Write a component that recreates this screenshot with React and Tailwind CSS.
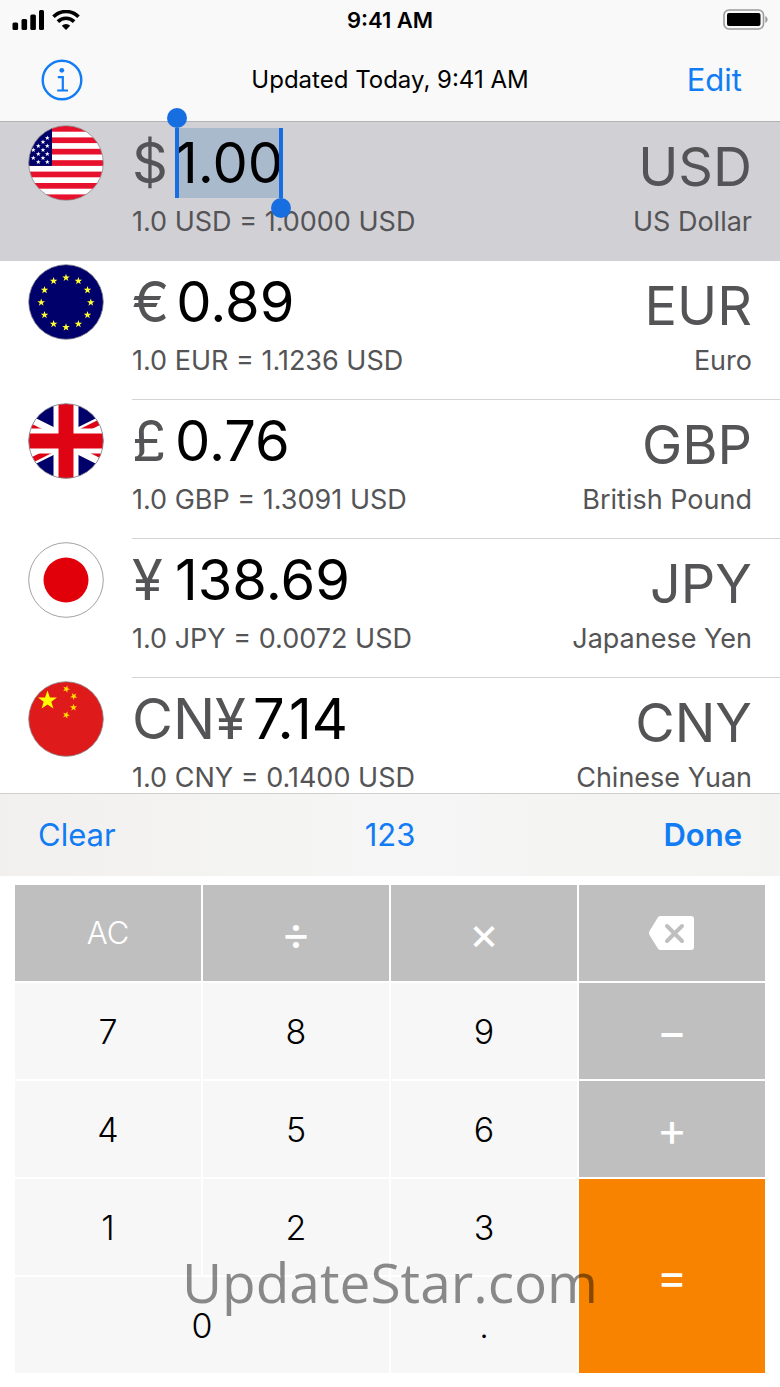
import React from 'react';

const STAR = '0,-10 2.4,-3.1 9.5,-3.1 3.8,1.2 5.9,8.1 0,4 -5.9,8.1 -3.8,1.2 -9.5,-3.1 -2.4,-3.1';

const Star = ({ x, y, size, fill, rotate = 0 }) => (
  <polygon points={STAR} fill={fill} transform={`translate(${x} ${y}) rotate(${rotate}) scale(${size / 10})`} />
);

const US_STARS = [
  [19.3, 13], [15, 17], [19.3, 21], [10.3, 21], [15, 25], [5.3, 25],
  [19.3, 29], [10.3, 29], [15, 33], [5.3, 33], [19.3, 37], [10.3, 37],
];

const UsFlag = () => (
  <>
    <rect width="76" height="76" fill="#fff" />
    {[0, 2, 4, 6, 8, 10, 12].map((i) => (
      <rect key={i} x="0" y={1 + i * 5.7} width="76" height="5.7" fill="#e8112d" />
    ))}
    <rect x="0" y="0" width="24" height="40.9" fill="#00006b" />
    {US_STARS.map(([x, y]) => (
      <Star key={`${x}-${y}`} x={x} y={y} size={2.6} fill="#fff" />
    ))}
  </>
);

const EuFlag = () => (
  <>
    <rect width="76" height="76" fill="#00006b" />
    {Array.from({ length: 12 }, (_, i) => {
      const a = (i * Math.PI) / 6;
      return <Star key={i} x={38 + 24.8 * Math.sin(a)} y={38.5 - 24.8 * Math.cos(a)} size={4} fill="#ffff33" />;
    })}
  </>
);

const UkFlag = () => (
  <>
    <rect width="76" height="76" fill="#00006b" />
    <path d="M-20 9 L96 67 M-20 67 L96 9" stroke="#fff" strokeWidth="14" />
    <path
      d="M38 38 L-20 9 V14 L28 38 Z M28 38 L96 4 V10 L40 38 Z M38 38 L96 67 V62 L48 38 Z M48 38 L-20 72 V66 L36 38 Z"
      fill="#df0414"
    />
    <path d="M38 0 V76 M0 38 H76" stroke="#fff" strokeWidth="25" />
    <path d="M38 0 V76 M0 38 H76" stroke="#df0414" strokeWidth="15" />
  </>
);

const JpFlag = () => (
  <>
    <rect width="76" height="76" fill="#fff" />
    <circle cx="38" cy="38" r="22.500" fill="#e1000a" />
  </>
);

const CnFlag = () => (
  <>
    <rect width="76" height="76" fill="#de1a1a" />
    <Star x={19.5} y={19.5} size={10} fill="#ffff00" />
    <Star x={38.3} y={8} size={3.8} fill="#ffde00" rotate={20} />
    <Star x={45.8} y={15.3} size={3.8} fill="#ffde00" rotate={40} />
    <Star x={45.5} y={26.5} size={3.8} fill="#ffde00" />
    <Star x={38.2} y={34} size={3.8} fill="#ffde00" rotate={20} />
  </>
);

const currencies = [
  { code: 'USD', name: 'US Dollar', symbol: '$', amount: '1.00', rate: '1.0000', Flag: UsFlag, active: true },
  { code: 'EUR', name: 'Euro', symbol: '€', amount: '0.89', rate: '1.1236', Flag: EuFlag },
  { code: 'GBP', name: 'British Pound', symbol: '£', amount: '0.76', rate: '1.3091', Flag: UkFlag },
  { code: 'JPY', name: 'Japanese Yen', symbol: '¥', amount: '138.69', rate: '0.0072', Flag: JpFlag },
  { code: 'CNY', name: 'Chinese Yuan', symbol: 'CN¥', amount: '7.14', rate: '0.1400', Flag: CnFlag },
];

const FlagBadge = ({ code, children }) => (
  <svg viewBox="0 0 76 76" className="size-[76px] shrink-0" aria-hidden="true">
    <clipPath id={`flag-${code}`}>
      <circle cx="38" cy="38" r="37.300" />
    </clipPath>
    <g clipPath={`url(#flag-${code})`}>{children}</g>
    <circle cx="38" cy="38" r="37.300" fill="none" stroke="#8a8a8e" strokeWidth="0.8" />
  </svg>
);

const CurrencyRow = ({ code, name, symbol, amount, rate, Flag, active }) => (
  <li className={`flex shrink-0 pl-7 ${active ? 'bg-[#d1d0d5]' : 'bg-white'}`}>
    <div className="pt-[3px] pr-7">
      <FlagBadge code={code}>
        <Flag />
      </FlagBadge>
    </div>
    <div className={`flex flex-1 justify-between pr-7 pb-[18px] border-b ${active ? 'border-[#d1d0d5]' : 'border-[#d4d4d6]'}`}>
      <div className="pt-[6px]">
        <div className="flex gap-[7px] text-[56px] leading-[70px]">
          <span className="min-w-9 text-[#545456]">{symbol}</span>
          <div className="relative">
            <input
              type="text"
              aria-label={`Amount in ${code}`}
              defaultValue={amount}
              className={`block h-[70px] field-sizing-content text-black outline-none ${active ? 'bg-[#a9bacd]' : 'bg-transparent'}`}
            />
            {/* Selection handles */}
            {active && (
              <>
                <span className="absolute left-0 top-0 h-full w-1 bg-[#176ee0]"></span>
                <span className="absolute -left-2 -top-5 size-5 rounded-full bg-[#176ee0]"></span>
                <span className="absolute right-0 top-0 h-full w-1 bg-[#176ee0]"></span>
                <span className="absolute -right-2 -bottom-5 size-5 rounded-full bg-[#176ee0]"></span>
              </>
            )}
          </div>
        </div>
        <p className="pt-1 text-[27px] leading-10 text-[#545456]">
          1.0 {code} = {rate} USD
        </p>
      </div>
      <div className="pt-[10px] text-right text-[#545456]">
        <div className="text-[54px] leading-[70px]">{code}</div>
        <div className="text-[27px] leading-10">{name}</div>
      </div>
    </div>
  </li>
);

const StatusBar = () => (
  <div className="grid grid-cols-3 items-center h-10 px-3">
    <div className="flex items-center gap-2">
      <svg viewBox="0 0 32 20" className="w-8 h-5" aria-hidden="true">
        <rect x="0.500" y="12.500" width="5.600" height="7.500" rx="1.500" />
        <rect x="9.500" y="9" width="5.600" height="11" rx="1.500" />
        <rect x="18.300" y="4.500" width="5.600" height="15.500" rx="1.500" />
        <rect x="27" y="0" width="5" height="20" rx="1.500" />
      </svg>
      <svg viewBox="0 0 28 20" className="w-7 h-5" aria-hidden="true">
        <g fill="none" stroke="#000" strokeWidth="3.600">
          <path d="M1.500 6.800 A17.500 17.500 0 0 1 26.500 6.800" />
          <path d="M5.900 11.600 A11.500 11.500 0 0 1 22.100 11.600" />
        </g>
        <path d="M14 20 L9.800 15.800 A6 6 0 0 1 18.200 15.800 Z" />
      </svg>
    </div>
    <div className="text-center text-[22px] leading-10 font-semibold">9:41 AM</div>
    <svg viewBox="0 0 46 22" className="w-[46px] h-[22px] justify-self-end" aria-hidden="true">
      <rect x="2" y="1" width="39.500" height="19" rx="5" fill="none" stroke="#9b9b9b" strokeWidth="1.600" />
      <rect x="5" y="4" width="33.500" height="13" rx="2" />
      <path d="M43.300 7 C46.300 8.500 46.300 12.500 43.300 14 Z" fill="#9b9b9b" />
    </svg>
  </div>
);

const NavBar = () => (
  <div className="grid grid-cols-[1fr_auto_1fr] items-center h-[81px] px-[38px] pb-[2px]">
    <button type="button" aria-label="Info" className="justify-self-start pl-[3px]">
      <svg viewBox="0 0 42 42" className="size-[42px]" fill="none" stroke="#127cf4" strokeWidth="2.400">
        <circle cx="21" cy="21" r="19.300" />
        <circle cx="20.800" cy="11.300" r="2.400" fill="#127cf4" stroke="none" />
        <path d="M16.800 18.200 H21.800 V31.500 M16.200 31.500 H27" strokeWidth="2.200" />
      </svg>
    </button>
    <div className="text-[24px] leading-8">Updated Today, 9:41 AM</div>
    <button type="button" className="justify-self-end text-[31px] leading-10 text-[#127cf4]">Edit</button>
  </div>
);

const Toolbar = () => (
  <div className="relative grid grid-cols-3 items-center h-[83px] shrink-0 px-[38px] border-t border-[#cfcfcf] bg-linear-to-r from-[#f2f0ee] via-[#f5f6f5] to-[#f3f3f1] text-[31px] leading-10 text-[#127cf4]">
    <button type="button" className="justify-self-start">Clear</button>
    <button type="button" className="justify-self-center">123</button>
    <button type="button" className="justify-self-end font-semibold">Done</button>
  </div>
);

const styles = {
  digit: 'bg-[#f7f7f7] text-black text-[34px] font-light',
  fn: 'bg-[#bfbfbf] text-white text-[31px] font-light',
  op: 'bg-[#bfbfbf] text-white text-[46px]',
  equals: 'row-span-2 bg-[#f88300] text-white text-[46px]',
};

const keys = [
  { label: 'AC', kind: 'fn' },
  { label: '÷', kind: 'op' },
  { label: '×', kind: 'op' },
  { label: 'Delete', kind: 'op' },
  { label: '7', kind: 'digit' },
  { label: '8', kind: 'digit' },
  { label: '9', kind: 'digit' },
  { label: '−', kind: 'op' },
  { label: '4', kind: 'digit' },
  { label: '5', kind: 'digit' },
  { label: '6', kind: 'digit' },
  { label: '+', kind: 'op' },
  { label: '1', kind: 'digit' },
  { label: '2', kind: 'digit' },
  { label: '3', kind: 'digit' },
  { label: '=', kind: 'equals' },
  { label: '0', kind: 'digit', wide: true },
  { label: '.', kind: 'digit' },
];

const DeleteIcon = () => (
  <svg viewBox="0 0 46 34" className="w-[46px] h-[34px]" aria-hidden="true">
    <path d="M11.500 0 H42 Q45 0 45 3 V31 Q45 34 42 34 H11.500 Q10 34 9 32.800 L0.500 19 Q-0.500 17 0.500 15 L9 1.200 Q10 0 11.500 0 Z" fill="#fff" />
    <path d="M18 10 L33 25 M33 10 L18 25" stroke="#bfbfbf" strokeWidth="4" strokeLinecap="round" />
  </svg>
);

const Keypad = () => (
  <div className="relative shrink-0 bg-white px-[15px] pt-[9px] pb-[14px]">
    <div className="grid grid-cols-4 auto-rows-[96px] gap-[2px]">
      {keys.map(({ label, kind, wide }) => (
        <button
          key={label}
          type="button"
          aria-label={label}
          className={`flex items-center justify-center ${styles[kind]} ${wide ? 'col-span-2' : ''}`}
        >
          {label === 'Delete' ? <DeleteIcon /> : label}
        </button>
      ))}
    </div>
    {/* Watermark */}
    <div className="absolute inset-x-0 bottom-[69px] text-center font-['Open_Sans',sans-serif] text-[55px] leading-[72px] text-black/45 pointer-events-none">
      UpdateStar.com
    </div>
  </div>
);

export default function App() {
  return (
    <div className="flex flex-col h-screen overflow-hidden bg-white font-['Inter',sans-serif] text-black">
      <header className="shrink-0 bg-[#f8f9f8] border-b border-[#b2b2b4]">
        <StatusBar />
        <NavBar />
      </header>
      <ul className="flex flex-col flex-1 min-h-0">
        {currencies.map((c) => (
          <CurrencyRow key={c.code} {...c} />
        ))}
      </ul>
      <Toolbar />
      <Keypad />
    </div>
  );
}
